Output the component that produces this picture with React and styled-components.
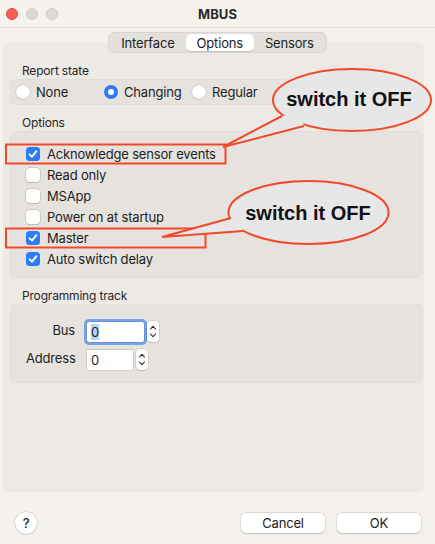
import React from 'react';
import styled, { createGlobalStyle } from 'styled-components';

const GlobalStyle = createGlobalStyle`
  html, body { margin: 0; padding: 0; }
  body {
    background: #f5f2ed;
    font-family: Inter, "Liberation Sans", "DejaVu Sans", sans-serif;
    color: #1d1d1d;
    letter-spacing: -0.18px;
    -webkit-font-smoothing: antialiased;
  }
`;

const Window = styled.div`
  position: relative;
  width: 435px;
  height: 544px;
  display: flex;
  flex-direction: column;
  background: #f5f2ed;
  overflow: hidden;
`;

const TitleBar = styled.div`
  height: 27px;
  border-bottom: 1px solid #e2dfda;
  display: grid;
  grid-template-columns: 1fr auto 1fr;
  align-items: center;
  padding: 0 6px;
`;

const Lights = styled.div`
  display: flex;
  gap: 8px;
`;

const Light = styled.span`
  width: 12px;
  height: 12px;
  border-radius: 50%;
  box-sizing: border-box;
  background: ${p => (p.$red ? '#fe5f57' : '#dcd9d4')};
  border: 0.5px solid ${p => (p.$red ? '#e0443e' : '#cfccc7')};
`;

const Title = styled.div`
  font-size: 13px;
  font-weight: 700;
  color: #2a2a2a;
  letter-spacing: 0.1px;
`;

const TabRow = styled.div`
  display: flex;
  justify-content: center;
  padding-top: 4px;
  margin-bottom: -11px;
  position: relative;
  z-index: 1;
`;

const Segmented = styled.div`
  display: flex;
  height: 21px;
  box-sizing: border-box;
  padding: 1px;
  background: #e4e1dc;
  border: 1px solid #d9d6d1;
  border-radius: 6px;
`;

const Segment = styled.div`
  display: flex;
  align-items: center;
  padding: 0 11px;
  font-size: 13px;
  color: #222;
  border-radius: 5px;
  background: ${p => (p.$active ? '#ffffff' : 'transparent')};
  box-shadow: ${p => (p.$active ? '0 0.5px 1px rgba(0,0,0,0.15)' : 'none')};
`;

const Panel = styled.div`
  flex: 1;
  margin: 0 11px 0 3px;
  background: #edeae5;
  border-radius: 6px;
  padding: 21px 1px 0 7px;
  display: flex;
  flex-direction: column;
  align-items: flex-start;
`;

const SectionLabel = styled.div`
  font-size: 12px;
  line-height: 16px;
  margin: ${p => p.$top || 0}px 0 0 12px;
  color: #262626;
`;

const Box = styled.div`
  align-self: stretch;
  background: #e6e3de;
  border-radius: 6px;
  box-shadow: inset 0 0 0 0.5px rgba(0, 0, 0, 0.03);
`;

const RadioBox = styled(Box)`
  align-self: flex-start;
  width: 273px;
  height: 26px;
  padding-left: 6px;
  display: grid;
  grid-template-columns: repeat(3, 88px);
  align-items: center;
`;

const Choice = styled.label`
  display: flex;
  align-items: center;
  gap: 6px;
  font-size: 13px;
`;

const Radio = styled.span`
  width: 14px;
  height: 14px;
  border-radius: 50%;
  box-sizing: border-box;
  display: flex;
  align-items: center;
  justify-content: center;
  background: ${p => (p.$on ? '#2d7cf6' : '#ffffff')};
  box-shadow: ${p =>
    p.$on ? 'none' : '0 0 0 0.5px rgba(0,0,0,0.18), 0 0.5px 1px rgba(0,0,0,0.12)'};
  &::after {
    content: '';
    display: ${p => (p.$on ? 'block' : 'none')};
    width: 6px;
    height: 6px;
    border-radius: 50%;
    background: #fff;
  }
`;

const OptionsBox = styled(Box)`
  padding: 12px 16px 9px;
  display: flex;
  flex-direction: column;
`;

const CheckRow = styled.label`
  height: 21px;
  display: flex;
  align-items: center;
  gap: 7px;
  font-size: 13px;
`;

const CheckBox = styled.span`
  width: 14px;
  height: 14px;
  border-radius: 3.5px;
  display: flex;
  align-items: center;
  justify-content: center;
  background: ${p => (p.$on ? '#2d7cf6' : '#ffffff')};
  box-shadow: ${p =>
    p.$on ? 'none' : '0 0 0 0.5px rgba(0,0,0,0.18), 0 0.5px 1px rgba(0,0,0,0.12)'};
`;

const ProgBox = styled(Box)`
  padding: 17px 0 13px 16px;
  display: grid;
  grid-template-columns: 49px auto;
  justify-content: start;
  align-items: center;
  column-gap: 12px;
  row-gap: 7px;
`;

const FieldLabel = styled.div`
  font-size: 13px;
  text-align: right;
  padding-bottom: 4px;
`;

const FieldCell = styled.div`
  display: flex;
  align-items: center;
  gap: 3px;
`;

const Field = styled.div`
  width: ${p => p.$w}px;
  height: 20px;
  box-sizing: border-box;
  background: #fff;
  padding-left: 4px;
  font-size: 13px;
  display: flex;
  align-items: center;
  box-shadow: ${p =>
    p.$focus
      ? '0 0 0 0.5px rgba(0,0,0,0.2), 0 0 0 3px rgba(80,140,240,0.75)'
      : '0 0 0 0.5px rgba(0,0,0,0.15), 0 -0.5px 0 rgba(0,0,0,0.1)'};
  border-radius: ${p => (p.$focus ? '2px' : '0')};
`;

const Selected = styled.span`
  background: #b4d2fb;
`;

const Stepper = styled.div`
  width: 12px;
  height: 21px;
  background: #fff;
  border-radius: 4px;
  box-shadow: 0 0 0 0.5px rgba(0,0,0,0.15), 0 0.5px 1px rgba(0,0,0,0.12);
  display: flex;
  align-items: center;
  justify-content: center;
`;

const Footer = styled.div`
  height: 52px;
  box-sizing: border-box;
  padding: 10px 14px 0 15px;
  display: flex;
  align-items: center;
  justify-content: space-between;
`;

const HelpButton = styled.div`
  width: 22px;
  height: 22px;
  border-radius: 50%;
  background: #fff;
  box-shadow: 0 0 0 0.5px rgba(0,0,0,0.15), 0 0.5px 1.5px rgba(0,0,0,0.15);
  display: flex;
  align-items: center;
  justify-content: center;
  font-size: 13px;
  font-weight: 500;
`;

const ButtonGroup = styled.div`
  display: flex;
  gap: 12px;
`;

const Button = styled.div`
  width: 84px;
  height: 20px;
  border-radius: 5px;
  background: #fff;
  box-shadow: 0 0 0 0.5px rgba(0,0,0,0.15), 0 0.5px 1.5px rgba(0,0,0,0.15);
  display: flex;
  align-items: center;
  justify-content: center;
  font-size: 13px;
`;

const Overlay = styled.svg`
  position: absolute;
  left: 0;
  top: 0;
  width: 435px;
  height: 544px;
  pointer-events: none;
  z-index: 5;
`;

const Check = () => (
  <svg width="10" height="10" viewBox="0 0 10 10">
    <path d="M1.6 5.3 L4 7.7 L8.4 2.2" fill="none" stroke="#fff" strokeWidth="1.9" strokeLinecap="round" strokeLinejoin="round" />
  </svg>
);

const StepIcon = () => (
  <svg width="8" height="15" viewBox="0 0 8 15">
    <path d="M1.5 5 L4 2.3 L6.5 5" fill="none" stroke="#222" strokeWidth="1.1" strokeLinecap="round" strokeLinejoin="round" />
    <path d="M1.5 10 L4 12.7 L6.5 10" fill="none" stroke="#222" strokeWidth="1.1" strokeLinecap="round" strokeLinejoin="round" />
  </svg>
);

const RED = '#f2482a';
const FILL = '#e7e7e7';

const Callout = ({ cx, cy, rx, ry, tip, p1, p2, inner, tx, ty }) => (
  <g>
    <ellipse cx={cx} cy={cy} rx={rx} ry={ry} fill={FILL} stroke={RED} strokeWidth="2" />
    <path d={`M${tip[0]} ${tip[1]} L${p1[0]} ${p1[1]} L${inner[0]} ${inner[1]} L${p2[0]} ${p2[1]} Z`} fill={FILL} />
    <path d={`M${p1[0]} ${p1[1]} L${tip[0]} ${tip[1]} L${p2[0]} ${p2[1]}`} fill="none" stroke={RED} strokeWidth="2" strokeLinejoin="miter" />
    <text x={tx} y={ty} textAnchor="middle" fontFamily='"Liberation Sans", Arial, sans-serif' fontWeight="700" fontSize="20" fill="#111" letterSpacing="0">
      switch it OFF
    </text>
  </g>
);

const options = [
  ['Acknowledge sensor events', true],
  ['Read only', false],
  ['MSApp', false],
  ['Power on at startup', false],
  ['Master', true],
  ['Auto switch delay', true],
];

export default function App() {
  return (
    <>
      <GlobalStyle />
      <Window>
        <TitleBar>
          <Lights>
            <Light $red />
            <Light />
            <Light />
          </Lights>
          <Title>MBUS</Title>
          <div />
        </TitleBar>
        <TabRow>
          <Segmented>
            <Segment>Interface</Segment>
            <Segment $active>Options</Segment>
            <Segment>Sensors</Segment>
          </Segmented>
        </TabRow>
        <Panel>
          <SectionLabel>Report state</SectionLabel>
          <RadioBox>
            <Choice><Radio />None</Choice>
            <Choice><Radio $on />Changing</Choice>
            <Choice><Radio />Regular</Choice>
          </RadioBox>
          <SectionLabel $top={10}>Options</SectionLabel>
          <OptionsBox>
            {options.map(([label, on]) => (
              <CheckRow key={label}>
                <CheckBox $on={on}>{on && <Check />}</CheckBox>
                {label}
              </CheckRow>
            ))}
          </OptionsBox>
          <SectionLabel $top={10}>Programming track</SectionLabel>
          <ProgBox>
            <FieldLabel>Bus</FieldLabel>
            <FieldCell>
              <Field $w={57} $focus><Selected>0</Selected></Field>
              <Stepper><StepIcon /></Stepper>
            </FieldCell>
            <FieldLabel>Address</FieldLabel>
            <FieldCell>
              <Field $w={46}>0</Field>
              <Stepper><StepIcon /></Stepper>
            </FieldCell>
          </ProgBox>
        </Panel>
        <Footer>
          <HelpButton>?</HelpButton>
          <ButtonGroup>
            <Button>Cancel</Button>
            <Button>OK</Button>
          </ButtonGroup>
        </Footer>
        <Overlay viewBox="0 0 435 544">
          <rect x="6" y="144.5" width="219.5" height="19" fill="none" stroke={RED} strokeWidth="2" />
          <rect x="6" y="228.5" width="199.5" height="19" fill="none" stroke={RED} strokeWidth="2" />
          <Callout cx={352} cy={100} rx={79} ry={31} tip={[223, 147]} p1={[282, 116]} p2={[304, 126]} inner={[300, 112]} tx={349} ty={106} />
          <Callout cx={308.5} cy={212.5} rx={80} ry={31.5} tip={[162, 237]} p1={[231, 218]} p2={[243, 231]} inner={[245, 220]} tx={308} ty={220} />
        </Overlay>
      </Window>
    </>
  );
}
